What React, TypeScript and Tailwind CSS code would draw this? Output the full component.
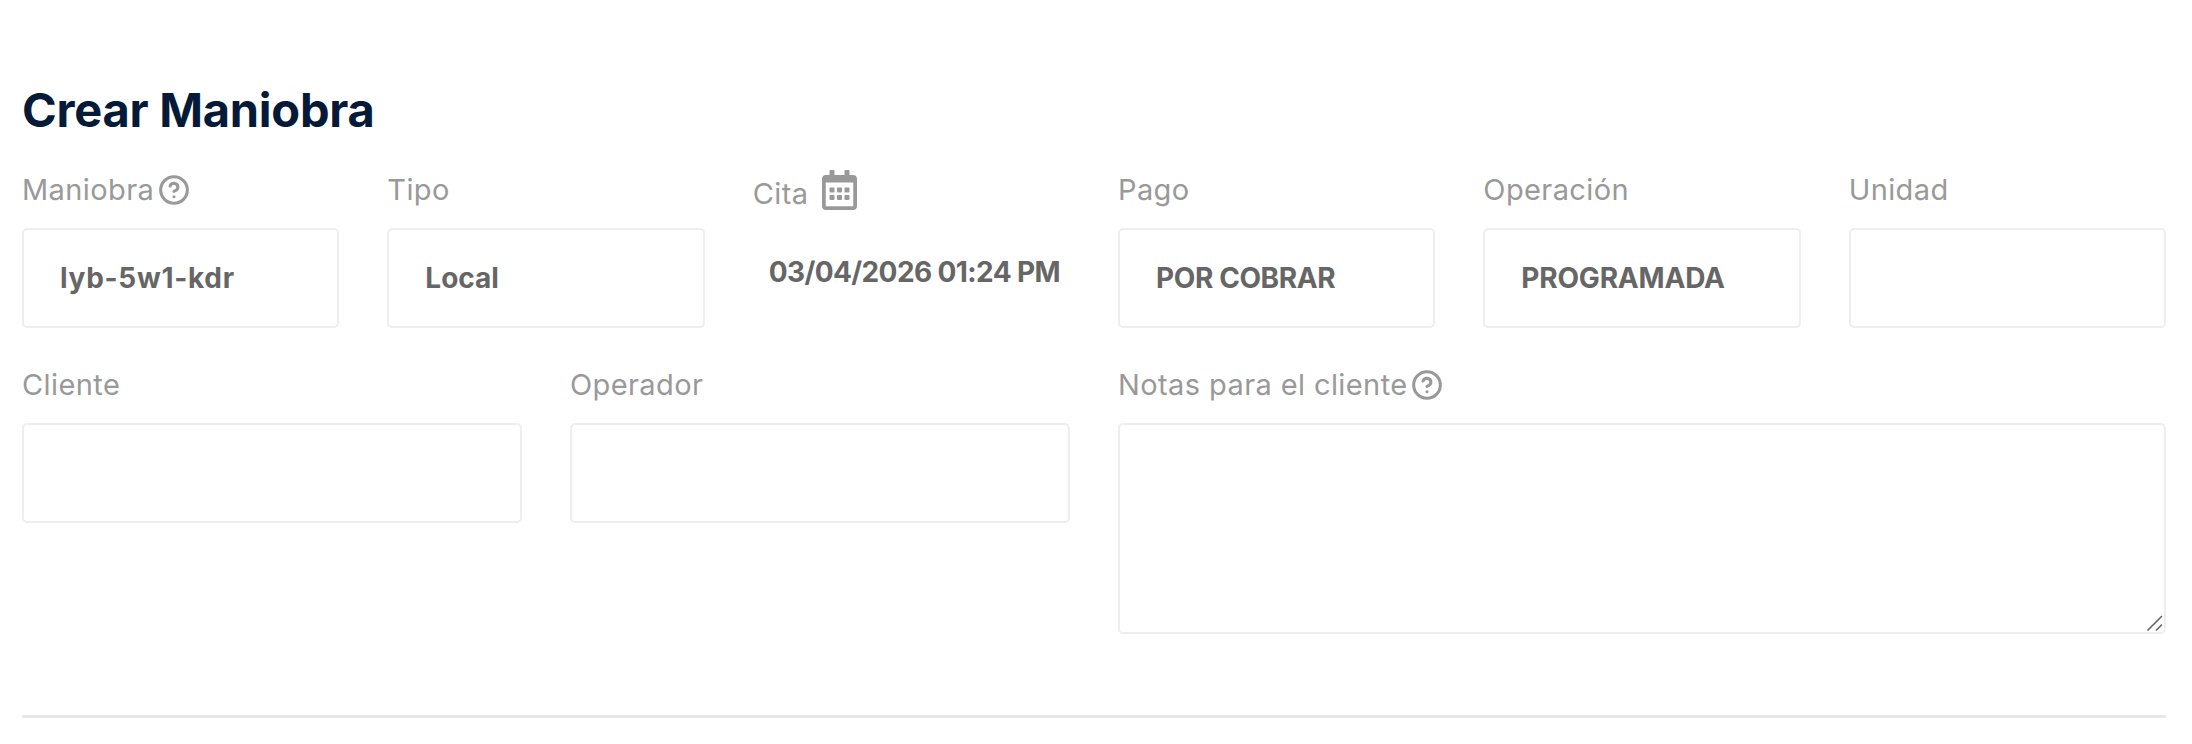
import { CircleHelp } from "lucide-react";
import { FaRegCalendarAlt } from "react-icons/fa";

const labelClass = "flex items-center h-[33px] text-[29px] leading-[33px] text-[#999999] tracking-[0.4px]";
const boxClass =
  "block w-full h-[100px] rounded-[5px] border-2 border-[#eeeeee] bg-white pl-[36px] text-[28px] font-bold text-[#666666] outline-none";

function Field({ label, value, help, tracking }: { label: string; value: string; help?: boolean; tracking?: string }) {
  return (
    <div className="col-span-2">
      <label className={labelClass}>
        {label}
        {help && <CircleHelp className="ml-[4px] h-[32px] w-[32px] text-[#999999]" strokeWidth={2.3} />}
      </label>
      <input readOnly value={value} className={`${boxClass} mt-[22px] ${tracking ?? ""}`} />
    </div>
  );
}

export default function App() {
  return (
    <div className="min-h-[744px] bg-white font-['Inter',sans-serif] pl-[22px] pr-[26px] pt-[84px]">
      <h1 className="text-[47px] leading-[52px] font-bold text-[#041a36] tracking-[-0.25px]">Crear Maniobra</h1>

      <div className="mt-[37px] grid grid-cols-12 gap-x-[48px]">
        <Field label="Maniobra" value="lyb-5w1-kdr" help tracking="tracking-[0.7px]" />
        <Field label="Tipo" value="Local" />
        <div className="col-span-2">
          <label className="flex items-center h-[33px] text-[29px] leading-[33px] text-[#999999] tracking-[0.4px]">
            <span className="mt-[8px]">Cita</span>
            <FaRegCalendarAlt className="ml-[14px] h-[40px] w-[35px] text-[#999999]" />
          </label>
          <div className="mt-[22px] pl-[16px] pt-[24px] text-[28px] leading-[40px] font-bold text-[#666666] whitespace-nowrap tracking-[-0.6px]">
            03/04/2026 01:24 PM
          </div>
        </div>
        <Field label="Pago" value="POR COBRAR" tracking="tracking-[-0.4px]" />
        <Field label="Operación" value="PROGRAMADA" tracking="tracking-[-0.2px]" />
        <Field label="Unidad" value="" />
      </div>

      <div className="mt-[40px] grid grid-cols-12 gap-x-[48px]">
        <div className="col-span-3">
          <label className={labelClass}>Cliente</label>
          <input readOnly className={`${boxClass} mt-[22px]`} />
        </div>
        <div className="col-span-3">
          <label className={labelClass}>Operador</label>
          <input readOnly className={`${boxClass} mt-[22px]`} />
        </div>
        <div className="col-span-6">
          <label className={labelClass}>
            Notas para el cliente
            <CircleHelp className="ml-[3px] h-[32px] w-[32px] text-[#999999]" strokeWidth={2.3} />
          </label>
          <div className="relative mt-[22px]">
            <textarea className="block w-full h-[211px] rounded-[5px] border-2 border-[#eeeeee] bg-white outline-none resize-none" />
            <svg className="absolute right-[2px] bottom-[2px] h-[18px] w-[18px] pointer-events-none" viewBox="0 0 18 18">
              <path d="M1.5 16.5 L16 2 M10 16.5 L16 10.5" stroke="#666666" strokeWidth="1.6" fill="none" />
            </svg>
          </div>
        </div>
      </div>

      <hr className="mt-[81px] border-0 h-[3px] bg-[#e8e8e8]" />
    </div>
  );
}
